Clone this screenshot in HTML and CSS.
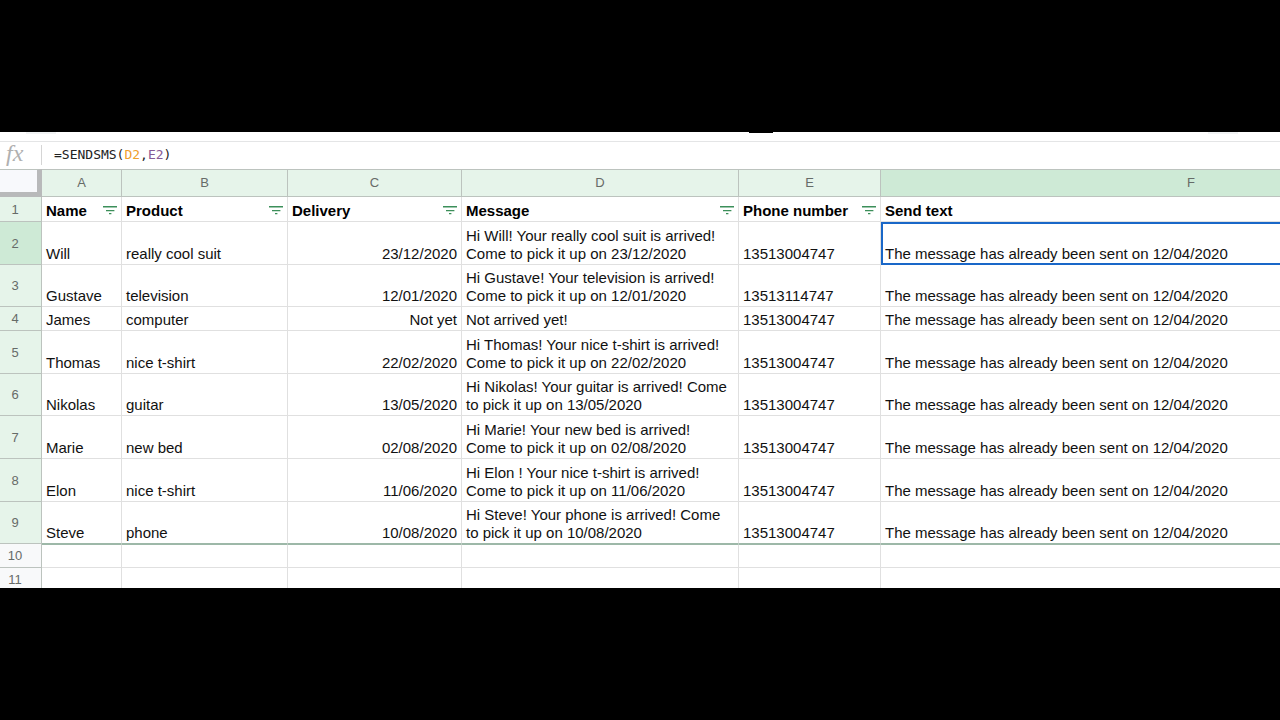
FILE: index.html
```html
<!DOCTYPE html>
<html lang="en">
<head>
    <meta charset="UTF-8">
    <meta name="viewport" content="width=device-width, initial-scale=1.0">
    <title>Send SMS - Spreadsheet</title>
    <link rel="stylesheet" href="styles.css">
</head>
<body>
    <svg class="sprite" aria-hidden="true">
        <symbol id="filter" viewBox="0 0 14 10">
            <path d="M0 0h14v1.5H0zM3 4h8.4v1.2H3zM6 7h2.4v1.2H6z" fill="#3c8f5a"/>
        </symbol>
    </svg>

    <main class="sheet">
        <!-- Bottom edge of the toolbar -->
        <div class="toolbar">
            <span class="tool tool-left"></span>
            <span class="tool tool-color"></span>
            <span class="tool tool-right"></span>
        </div>

        <!-- Formula bar -->
        <div class="formula-bar">
            <span class="fx" id="fxLabel">fx</span>
            <div class="formula" role="textbox" contenteditable="true" spellcheck="false" aria-labelledby="fxLabel">=SENDSMS(<span class="ref-orange">D2</span>,<span class="ref-purple">E2</span>)</div>
        </div>

        <!-- Grid -->
        <table class="grid">
            <colgroup>
                <col class="col-num">
                <col class="col-a">
                <col class="col-b">
                <col class="col-c">
                <col class="col-d">
                <col class="col-e">
                <col class="col-f">
            </colgroup>
            <thead>
                <tr>
                    <td class="corner"></td>
                    <th>A</th>
                    <th>B</th>
                    <th>C</th>
                    <th>D</th>
                    <th>E</th>
                    <th class="active">F</th>
                </tr>
            </thead>
            <tbody>
                <tr class="titles">
                    <th>1</th>
                    <td><div class="title">Name <button aria-label="Filter Name"><svg><use href="#filter"/></svg></button></div></td>
                    <td><div class="title">Product <button aria-label="Filter Product"><svg><use href="#filter"/></svg></button></div></td>
                    <td><div class="title">Delivery <button aria-label="Filter Delivery"><svg><use href="#filter"/></svg></button></div></td>
                    <td><div class="title">Message <button aria-label="Filter Message"><svg><use href="#filter"/></svg></button></div></td>
                    <td><div class="title">Phone number <button aria-label="Filter Phone number"><svg><use href="#filter"/></svg></button></div></td>
                    <td><div class="title">Send text</div></td>
                </tr>
                <tr class="tall">
                    <th class="active">2</th>
                    <td>Will</td>
                    <td>really cool suit</td>
                    <td class="right">23/12/2020</td>
                    <td>Hi Will! Your really cool suit is arrived!<br>Come to pick it up on 23/12/2020</td>
                    <td>13513004747</td>
                    <td class="selected">The message has already been sent on 12/04/2020</td>
                </tr>
                <tr class="tall">
                    <th>3</th>
                    <td>Gustave</td>
                    <td>television</td>
                    <td class="right">12/01/2020</td>
                    <td>Hi Gustave! Your television is arrived!<br>Come to pick it up on 12/01/2020</td>
                    <td>13513114747</td>
                    <td>The message has already been sent on 12/04/2020</td>
                </tr>
                <tr>
                    <th>4</th>
                    <td>James</td>
                    <td>computer</td>
                    <td class="right">Not yet</td>
                    <td>Not arrived yet!</td>
                    <td>13513004747</td>
                    <td>The message has already been sent on 12/04/2020</td>
                </tr>
                <tr class="tall">
                    <th>5</th>
                    <td>Thomas</td>
                    <td>nice t-shirt</td>
                    <td class="right">22/02/2020</td>
                    <td>Hi Thomas! Your nice t-shirt is arrived!<br>Come to pick it up on 22/02/2020</td>
                    <td>13513004747</td>
                    <td>The message has already been sent on 12/04/2020</td>
                </tr>
                <tr class="tall">
                    <th>6</th>
                    <td>Nikolas</td>
                    <td>guitar</td>
                    <td class="right">13/05/2020</td>
                    <td>Hi Nikolas! Your guitar is arrived! Come<br>to pick it up on 13/05/2020</td>
                    <td>13513004747</td>
                    <td>The message has already been sent on 12/04/2020</td>
                </tr>
                <tr class="tall">
                    <th>7</th>
                    <td>Marie</td>
                    <td>new bed</td>
                    <td class="right">02/08/2020</td>
                    <td>Hi Marie! Your new bed is arrived!<br>Come to pick it up on 02/08/2020</td>
                    <td>13513004747</td>
                    <td>The message has already been sent on 12/04/2020</td>
                </tr>
                <tr class="tall">
                    <th>8</th>
                    <td>Elon</td>
                    <td>nice t-shirt</td>
                    <td class="right">11/06/2020</td>
                    <td>Hi Elon ! Your nice t-shirt is arrived!<br>Come to pick it up on 11/06/2020</td>
                    <td>13513004747</td>
                    <td>The message has already been sent on 12/04/2020</td>
                </tr>
                <tr class="tall last">
                    <th>9</th>
                    <td>Steve</td>
                    <td>phone</td>
                    <td class="right">10/08/2020</td>
                    <td>Hi Steve! Your phone is arrived! Come<br>to pick it up on 10/08/2020</td>
                    <td>13513004747</td>
                    <td>The message has already been sent on 12/04/2020</td>
                </tr>
                <tr class="empty">
                    <th>10</th>
                    <td></td><td></td><td></td><td></td><td></td><td></td>
                </tr>
                <tr class="empty">
                    <th>11</th>
                    <td></td><td></td><td></td><td></td><td></td><td></td>
                </tr>
            </tbody>
        </table>
    </main>
</body>
</html>
```

FILE: styles.css
```css
* {
    box-sizing: border-box;
    margin: 0;
    padding: 0;
}

body {
    font-family: "Liberation Sans", Arial, sans-serif;
    font-size: 15px;
    line-height: 18px;
    color: #111;
    background-color: #000;
    min-height: 100vh;
    display: flex;
    flex-direction: column;
    justify-content: center;
}

.sprite {
    position: absolute;
    width: 0;
    height: 0;
}

.sheet {
    width: 100%;
    background: #fff;
    overflow: hidden;
}

/* Toolbar edge */
.toolbar {
    display: flex;
    justify-content: space-between;
    height: 10px;
    padding: 0 42px 0 26px;
    border-bottom: 1px solid #e4e5e6;
}

.tool {
    width: 30px;
    height: 2px;
    background: #f1f3f4;
}

.tool-color {
    width: 24px;
    height: 1px;
    margin-left: 258px;
    background: #000;
}

/* Formula bar */
.formula-bar {
    display: flex;
    align-items: center;
    height: 27px;
    padding-bottom: 2px;
}

.fx {
    width: 42px;
    padding: 0 0 4px 6px;
    border-right: 1px solid #d5d5d5;
    font-family: "Liberation Serif", serif;
    font-style: italic;
    font-size: 24px;
    line-height: 16px;
    color: #b0b0b0;
}

.formula {
    flex: 1;
    padding-left: 12px;
    font-family: "DejaVu Sans Mono", monospace;
    font-size: 13px;
    color: #222;
    outline: none;
}

.ref-orange {
    color: #f0a02c;
}

.ref-purple {
    color: #865a96;
}

/* Grid */
.grid {
    table-layout: fixed;
    width: 0;
    border-collapse: separate;
    border-spacing: 0;
    margin-bottom: -4px;
}

.col-num { width: 42px; }
.col-a { width: 80px; }
.col-b { width: 166px; }
.col-c { width: 174px; }
.col-d { width: 277px; }
.col-e { width: 142px; }
.col-f { width: 621px; }

.grid tr {
    height: 24px;
}

.grid td {
    padding: 0 4px 1px;
    border-right: 1px solid #e0e0e0;
    border-bottom: 1px solid #e0e0e0;
    vertical-align: bottom;
    white-space: nowrap;
}

.grid th {
    background: #e6f4ea;
    border-right: 1px solid #bcc3be;
    border-bottom: 1px solid #bcc3be;
    font-size: 13px;
    font-weight: normal;
    color: #666b68;
    vertical-align: middle;
}

.grid thead tr {
    height: 28px;
}

.grid thead th,
.grid thead td {
    border-top: 1px solid #bcc3be;
}

.grid tbody th {
    padding: 1px 11px 0 0;
}

.grid th.active {
    background: #ceead6;
}

.grid .corner {
    background: #f8f9fc;
    border-right: 5px solid #b8b9ba;
    border-bottom: 5px solid #b8b9ba;
}

.grid .titles {
    height: 25px;
}

.grid .tall {
    height: 43px;
}

.grid .tall:nth-child(3n) {
    height: 42px;
}

.grid .right {
    text-align: right;
}

.grid .selected {
    border-color: #1967c8;
    box-shadow: inset 2px 2px #1967c8, inset 0 -1px #1967c8;
}

/* green line under the filtered range */
.grid .last td {
    border-bottom-color: #9db8a8;
}

.grid .last + .empty td {
    border-top: 1px solid #9db8a8;
}

.grid .empty th {
    background: #f8f9fa;
}

.title {
    display: flex;
    justify-content: space-between;
    align-items: center;
    font-weight: bold;
    color: #000;
}

.title button {
    display: flex;
    border: none;
    background: none;
    cursor: pointer;
}

.title svg {
    width: 14px;
    height: 10px;
}
```
